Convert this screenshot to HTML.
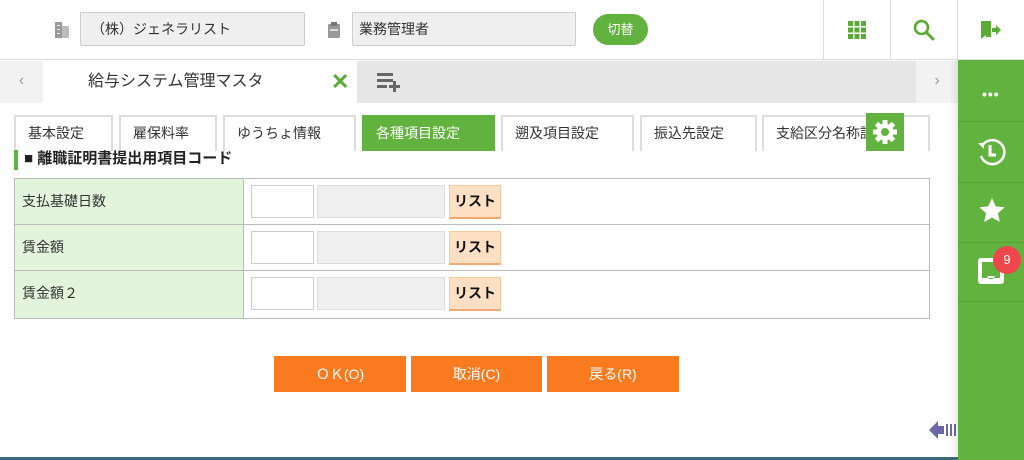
<!DOCTYPE html>
<html><head><meta charset="utf-8"><style>
*{box-sizing:border-box;margin:0;padding:0}
body{width:1024px;height:460px;overflow:hidden;background:#fff;font-family:"Liberation Sans","Noto Sans CJK JP",sans-serif;position:relative;color:#333}
.a{position:absolute}
.inp{position:absolute;background:#efefef;border:1px solid #ccc;border-radius:2px;font-size:14px;padding-left:10px;line-height:32px}
.tab{position:absolute;top:115px;height:36px;border:2px solid #ddd;border-bottom:none;background:#fff;font-size:14px;padding-left:12px;line-height:32px}
.row{position:absolute;left:14px;width:916px;height:47px;border:1px solid #bbb}
.lab{position:absolute;left:0;top:0;width:229px;height:100%;background:#e2f4dc;border-right:1px solid #bbb;font-size:14px;padding-left:7px;line-height:44px}
.b1{position:absolute;left:236px;top:6px;width:63px;height:33px;border:1px solid #ccc;background:#fff}
.b2{position:absolute;left:302px;top:6px;width:128px;height:33px;border:1px solid #ddd;background:#f0f0f0}
.b3{position:absolute;left:434px;top:6px;width:52px;height:34px;background:#fde0c4;border:1px solid #f4c9a0;border-bottom:2px solid #f1a970;font-weight:bold;font-size:14px;color:#111;line-height:30px;text-align:center}
.btn{position:absolute;top:356px;height:36px;background:#f97a1f;color:#fff;font-size:14px;text-align:center;line-height:36px}
.sb{position:absolute;left:958px;width:66px;border-bottom:1px solid #55a233}
</style></head><body>
<div class="a" style="left:0;top:0;width:1024px;height:60px;border-bottom:1px solid #ddd"></div>
<svg class="a" style="left:55px;top:22px" width="14" height="16"><rect x="0" y="0" width="7" height="16" fill="#999"/><rect x="7" y="4" width="7" height="12" fill="#bbb"/><rect x="2" y="3" width="3" height="1" fill="#eee"/><rect x="2" y="7" width="3" height="1" fill="#eee"/><rect x="2" y="11" width="3" height="1" fill="#eee"/></svg>
<div class="inp" style="left:80px;top:12px;width:225px;height:34px">（株）ジェネラリスト</div>
<svg class="a" style="left:328px;top:22px" width="12" height="16"><rect x="0" y="2" width="12" height="14" rx="1" fill="#999"/><rect x="3" y="0" width="6" height="4" fill="#777"/><rect x="2" y="7" width="8" height="2" fill="#ddd"/></svg>
<div class="inp" style="left:352px;top:12px;width:224px;height:34px;padding-left:6px">業務管理者</div>
<div class="a" style="left:593px;top:14px;width:55px;height:31px;border-radius:16px;background:#62b23f;color:#fff;font-size:13px;text-align:center;line-height:31px">切替</div>
<div class="a" style="left:823px;top:0;width:1px;height:59px;background:#ddd"></div>
<div class="a" style="left:890px;top:0;width:1px;height:59px;background:#ddd"></div>
<div class="a" style="left:957px;top:0;width:1px;height:59px;background:#ddd"></div>
<svg class="a" style="left:848px;top:21px" width="18" height="18" fill="#5aab35"><rect x="0" y="0" width="5" height="5"/><rect x="6.5" y="0" width="5" height="5"/><rect x="13" y="0" width="5" height="5"/><rect x="0" y="6.5" width="5" height="5"/><rect x="6.5" y="6.5" width="5" height="5"/><rect x="13" y="6.5" width="5" height="5"/><rect x="0" y="13" width="5" height="5"/><rect x="6.5" y="13" width="5" height="5"/><rect x="13" y="13" width="5" height="5"/></svg>
<svg class="a" style="left:913px;top:19px" width="22" height="22"><circle cx="8.5" cy="8.5" r="6.5" stroke="#5aab35" stroke-width="2.6" fill="none"/><line x1="13.5" y1="13.5" x2="20" y2="20" stroke="#5aab35" stroke-width="3" stroke-linecap="round"/></svg>
<svg class="a" style="left:980px;top:20px" width="22" height="20"><path d="M1 1h10v4H6v10l-5 4z" fill="#5aab35"/><path d="M6 1h5v16H6z" fill="#5aab35"/><path d="M12 8h4V5l5 5-5 5v-3h-4z" fill="#5aab35"/></svg>
<div class="a" style="left:0;top:61px;width:958px;height:42px;background:#e6e6e6"></div>
<div class="a" style="left:0;top:61px;width:43px;height:42px;background:#f2f2f2;color:#999;font-size:16px;text-align:center;line-height:40px">‹</div>
<div class="a" style="left:43px;top:61px;width:314px;height:42px;background:#fff;font-size:16px;padding-left:45px;line-height:42px">給与システム管理マスタ</div>
<div class="a" style="left:331px;top:69px;color:#5aab35;font-size:22px;font-weight:bold;line-height:26px">✕</div>
<svg class="a" style="left:377px;top:72px" width="26" height="20" fill="#666"><rect x="0" y="1" width="16" height="3"/><rect x="0" y="7" width="16" height="3"/><rect x="0" y="13" width="10" height="3"/><rect x="16" y="9" width="3" height="11"/><rect x="12" y="13" width="11" height="3"/></svg>
<div class="a" style="left:916px;top:61px;width:42px;height:42px;background:#f2f2f2;color:#999;font-size:16px;text-align:center;line-height:40px">›</div>
<div class="tab" style="left:14px;width:99px">基本設定</div>
<div class="tab" style="left:119px;width:98px">雇保料率</div>
<div class="tab" style="left:223px;width:133px">ゆうちょ情報</div>
<div class="tab" style="left:362px;width:133px;background:#62b23f;border-color:#62b23f;color:#fff">各種項目設定</div>
<div class="tab" style="left:501px;width:133px">遡及項目設定</div>
<div class="tab" style="left:640px;width:117px">振込先設定</div>
<div class="tab" style="left:762px;width:168px;overflow:hidden;white-space:nowrap">支給区分名称設定</div>
<div class="a" style="left:866px;top:113px;width:38px;height:38px;background:#62b23f"></div>
<svg class="a" style="left:872px;top:119px" width="26" height="26" viewBox="0 0 26 26"><g fill="#fff" transform="translate(13 13)"><rect x="-2.5" y="-12" width="5" height="24"/><rect x="-2.5" y="-12" width="5" height="24" transform="rotate(45)"/><rect x="-2.5" y="-12" width="5" height="24" transform="rotate(90)"/><rect x="-2.5" y="-12" width="5" height="24" transform="rotate(135)"/><circle r="8.5"/></g><circle cx="13" cy="13" r="4" fill="#62b23f"/></svg>
<div class="a" style="left:14px;top:150px;width:4px;height:20px;background:#62b23f"></div>
<div class="a" style="left:24px;top:149px;font-size:15px;font-weight:bold;color:#222;line-height:20px">■ 離職証明書提出用項目コード</div>
<div class="row" style="top:178px"><div class="lab">支払基礎日数</div><div class="b1"></div><div class="b2"></div><div class="b3">リスト</div></div>
<div class="row" style="top:225px;height:46px;border-top:none"><div class="lab">賃金額</div><div class="b1"></div><div class="b2"></div><div class="b3">リスト</div></div>
<div class="row" style="top:271px;height:48px;border-top:none"><div class="lab">賃金額２</div><div class="b1"></div><div class="b2"></div><div class="b3">リスト</div></div>
<div class="btn" style="left:274px;width:132px">ＯＫ(O)</div>
<div class="btn" style="left:411px;width:131px">取消(C)</div>
<div class="btn" style="left:547px;width:132px">戻る(R)</div>
<svg class="a" style="left:928px;top:419px" width="30" height="22"><path d="M1 11l9-9v5h6v8h-6v5z" fill="#6a68a8"/><rect x="18" y="5" width="2" height="12" fill="#6a68a8"/><rect x="22" y="5" width="2" height="12" fill="#6a68a8"/><rect x="26" y="5" width="2" height="12" fill="#6a68a8"/></svg>
<div class="a" style="left:0;top:457px;width:958px;height:3px;background:#3d6b7a"></div>
<div class="a" style="left:950px;top:60px;width:8px;height:400px;background:linear-gradient(to right,rgba(0,0,0,0),rgba(0,0,0,0.08))"></div>
<div class="a" style="left:958px;top:60px;width:66px;height:400px;background:#62b23f"></div>
<div class="sb" style="top:60px;height:62px"></div>
<div class="sb" style="top:122px;height:61px"></div>
<div class="sb" style="top:183px;height:60px"></div>
<div class="sb" style="top:243px;height:59px"></div>
<div class="a" style="left:982px;top:86px;color:#fff;font-size:14px;font-weight:bold;letter-spacing:1px">•••</div>
<svg class="a" style="left:976px;top:136px" width="32" height="32" viewBox="0 0 32 32"><path d="M6 10A12 12 0 1 1 5 20" stroke="#fff" stroke-width="2.5" fill="none"/><path d="M2 7l6 0 0 6z" fill="#fff"/><path d="M14 9v10h6" stroke="#fff" stroke-width="3" fill="none"/></svg>
<svg class="a" style="left:978px;top:197px" width="28" height="28" viewBox="0 0 24 24"><path d="M12 1l3.2 7 7.6.8-5.7 5.1 1.6 7.5L12 17.6 5.3 21.4l1.6-7.5L1.2 8.8 8.8 8z" fill="#fff"/></svg>
<svg class="a" style="left:976px;top:256px" width="30" height="30"><rect x="2" y="2" width="26" height="26" rx="3" fill="#fff"/><rect x="6" y="6" width="18" height="14" fill="#62b23f"/><path d="M6 20h5l2 3h4l2-3h5v2H6z" fill="#62b23f"/></svg>
<div class="a" style="left:993px;top:246px;width:28px;height:28px;border-radius:50%;background:#f0454a;color:#fff;font-size:13px;text-align:center;line-height:28px">9</div>
</body></html>
